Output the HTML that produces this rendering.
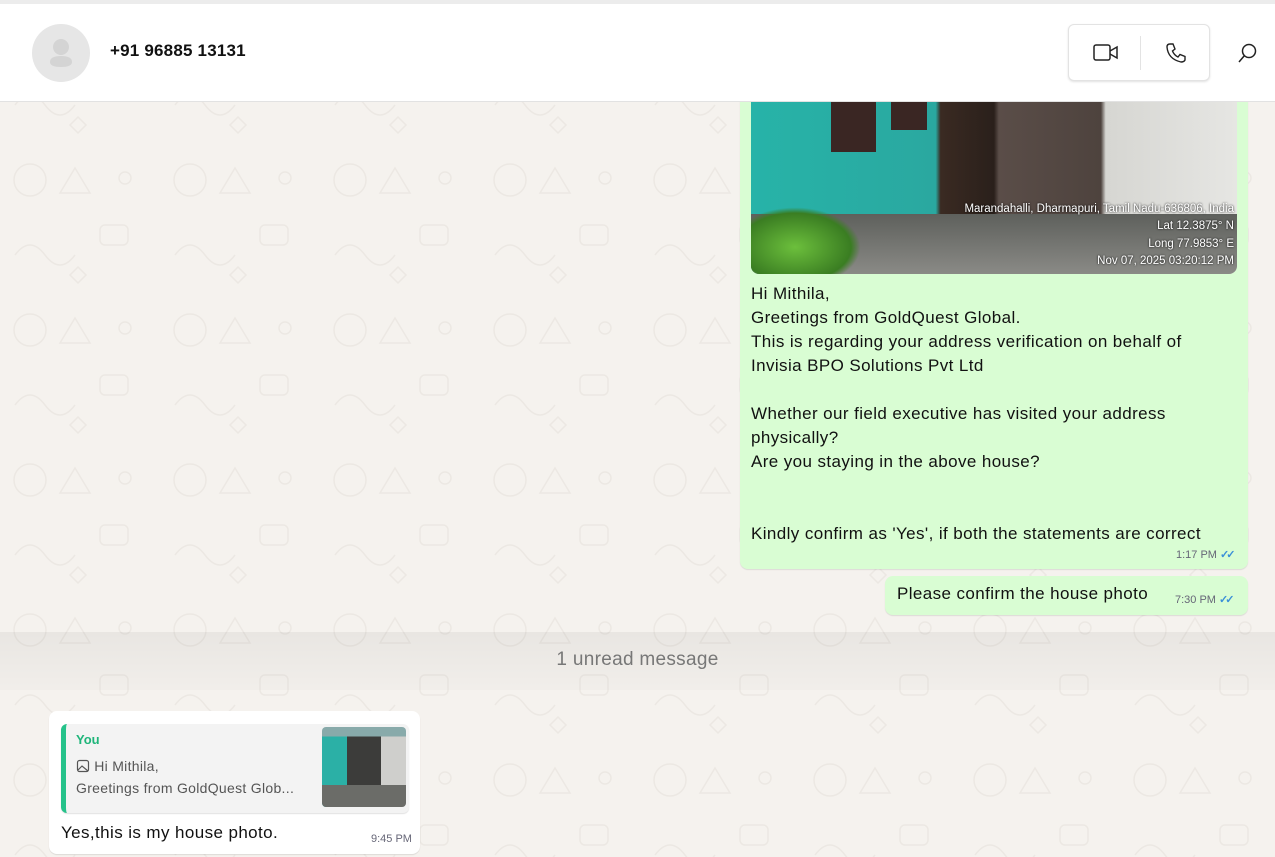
<!DOCTYPE html>
<html><head><meta charset="utf-8"><style>
*{margin:0;padding:0;box-sizing:border-box}
body{width:1275px;height:857px;overflow:hidden;background:#f5f2ee;font-family:"Segoe UI","Liberation Sans",sans-serif;position:relative;color:#111}
.pat{position:absolute;left:0;top:0;width:1275px;height:857px}
.top{position:absolute;left:0;top:0;width:1275px;height:4px;background:#ececec}
.hdr{position:absolute;left:0;top:4px;width:1275px;height:98px;background:#fff;border-bottom:1px solid #e2e2e2;z-index:5}
.av{position:absolute;left:32px;top:20px;width:58px;height:58px;border-radius:50%;background:#e6e6e6}
.name{position:absolute;left:110px;top:37px;font-size:17px;font-weight:bold;color:#111;letter-spacing:0.2px}
.btns{position:absolute;left:1068px;top:20px;width:142px;height:57px;border:1px solid #e3e3e3;border-radius:6px;box-shadow:0 1px 2px rgba(0,0,0,.12);background:#fff}
.sep{position:absolute;left:71px;top:11px;width:1px;height:34px;background:#e3e3e3}
.b{position:absolute;border-radius:8px;box-shadow:0 1px 1px rgba(0,0,0,.1)}
.g{background:#d9fdd3}
.w{background:#fff}
.txt{font-size:17px;line-height:24px;color:#111;letter-spacing:0.4px;white-space:nowrap}
.tm{position:absolute;font-size:11px;color:#667}
.tick{color:#3a8fd8;font-size:11px;font-weight:bold;letter-spacing:-3px}
.img{position:absolute;left:751px;top:102px;width:486px;height:172px;border-radius:0 0 8px 8px;overflow:hidden;background:linear-gradient(90deg,#27b3a8 0%,#2aa8a0 38%,#3a2a22 39%,#2a201b 50%,#5a4d48 51%,#4e433e 72%,#d6d6d2 73%,#e6e6e3 100%)}
.ground{position:absolute;left:0;bottom:0;width:100%;height:60px;background:linear-gradient(180deg,#5e605c,#8a8a86)}
.ov{position:absolute;right:3px;color:#fff;font-size:11.5px;text-shadow:0 0 2px #000;text-align:right;white-space:nowrap}
.unread{position:absolute;left:0;top:632px;width:1275px;height:58px;background:linear-gradient(180deg,rgba(0,0,0,.05),rgba(0,0,0,.015));text-align:center;font-size:19px;color:#777;line-height:56px;letter-spacing:0.3px}
</style></head><body>
<svg class="pat" width="1275" height="857"><defs><pattern id="p" width="160" height="150" patternUnits="userSpaceOnUse"><g fill="none" stroke="#ece8e3" stroke-width="1.5"><circle cx="30" cy="30" r="16"/><path d="M75 18 l15 25 h-30z"/><rect x="100" y="75" width="28" height="20" rx="5"/><path d="M15 105 q15 -20 30 0 t30 0"/><circle cx="125" cy="28" r="6"/><path d="M70 125 l8 -8 8 8 -8 8z"/></g></pattern></defs><rect width="1275" height="857" fill="url(#p)"/></svg>
<div class="top"></div>
<div class="hdr">
 <div class="av"><svg width="58" height="58" viewBox="0 0 58 58"><circle cx="29" cy="23" r="8" fill="#d4d4d4"/><path d="M18 38 Q18 32 29 32 Q40 32 40 38 Q40 43 29 43 Q18 43 18 38Z" fill="#d4d4d4"/></svg></div>
 <div class="name">+91 96885 13131</div>
 <div class="btns"><div class="sep"></div>
  <svg style="position:absolute;left:24px;top:18px" width="26" height="20" viewBox="0 0 26 20"><rect x="1" y="2" width="16" height="15" rx="2" fill="none" stroke="#222" stroke-width="1.5"/><path d="M17 8 L24 4 V15 L17 11" fill="none" stroke="#222" stroke-width="1.5"/></svg>
  <svg style="position:absolute;left:96px;top:17px" width="22" height="22" viewBox="0 0 22 22"><path d="M5 2 L8 2 L10 7 L7.5 9 Q9 13 13 15 L15 12.5 L20 14.5 L20 18 Q19 20 16 20 Q3 17 2 5 Q2 2 5 2Z" fill="none" stroke="#222" stroke-width="1.4"/></svg>
 </div>
 <svg style="position:absolute;left:1237px;top:39px" width="22" height="22" viewBox="0 0 22 22"><circle cx="12" cy="8" r="6.5" fill="none" stroke="#222" stroke-width="1.5"/><path d="M7.5 12.5 L2 19" stroke="#222" stroke-width="1.5"/></svg>
</div>

<div class="b g" style="left:740px;top:90px;width:508px;height:479px"></div>
<div class="img"><div class="ground"></div>
 <div style="position:absolute;left:80px;top:0;width:45px;height:50px;background:#3a2623"></div>
 <div style="position:absolute;left:140px;top:0;width:36px;height:28px;background:#3a2623"></div>
 <div style="position:absolute;left:0;top:105px;width:110px;height:67px;background:radial-gradient(ellipse at 40% 60%,#6cbf3c,#3a7d22 60%,transparent 70%)"></div>
 <div class="ov" style="top:101px">Marandahalli, Dharmapuri, Tamil Nadu-636806, India</div>
 <div class="ov" style="top:118px">Lat 12.3875° N</div>
 <div class="ov" style="top:136px">Long 77.9853° E</div>
 <div class="ov" style="top:153px">Nov 07, 2025 03:20:12 PM</div>
</div>
<div class="txt" style="position:absolute;left:751px;top:282px;width:480px">Hi Mithila,<br>Greetings from GoldQuest Global.<br>This is regarding your address verification on behalf of<br>Invisia BPO Solutions Pvt Ltd<br><br>Whether our field executive has visited your address<br>physically?<br>Are you staying in the above house?<br><br><br>Kindly confirm as 'Yes', if both the statements are correct</div>
<div class="tm" style="left:1176px;top:548px">1:17 PM <span class="tick">✓✓</span></div>

<div class="b g" style="left:885px;top:576px;width:363px;height:39px"></div>
<div class="txt" style="position:absolute;left:897px;top:582px">Please confirm the house photo</div>
<div class="tm" style="left:1175px;top:593px">7:30 PM <span class="tick">✓✓</span></div>

<div class="unread">1 unread message</div>

<div class="b w" style="left:49px;top:711px;width:371px;height:143px"></div>
<div style="position:absolute;left:61px;top:724px;width:348px;height:89px;background:#f3f3f3;border-radius:6px;border-left:5px solid #25c28a;box-shadow:0 1px 1px rgba(0,0,0,.12);overflow:hidden">
 <div style="position:absolute;left:10px;top:8px;font-size:13px;font-weight:bold;color:#1fb57a">You</div>
 <div style="position:absolute;left:10px;top:31px;font-size:14px;color:#555;line-height:22px;letter-spacing:0.3px;white-space:nowrap">
  <svg width="14" height="14" viewBox="0 0 14 14" style="vertical-align:-2px"><rect x="1.5" y="1.5" width="11" height="11" rx="2" fill="none" stroke="#555" stroke-width="1.2"/><path d="M2 11 L6 7 L12 12" fill="none" stroke="#555" stroke-width="1.2"/></svg> Hi Mithila,<br>Greetings from GoldQuest Glob...</div>
 <div style="position:absolute;left:256px;top:3px;width:84px;height:80px;border-radius:4px;background:linear-gradient(180deg,#8aa 0 12%,transparent 12%),linear-gradient(90deg,#2bb0a6 0 30%,#3c3c3a 30% 70%,#cfcfcc 70%);"><div style="position:absolute;bottom:0;width:100%;height:22px;background:#6b6c68;border-radius:0 0 4px 4px"></div></div>
</div>
<div class="txt" style="position:absolute;left:61px;top:821px">Yes,this is my house photo.</div>
<div class="tm" style="left:371px;top:833px">9:45 PM</div>
</body></html>
